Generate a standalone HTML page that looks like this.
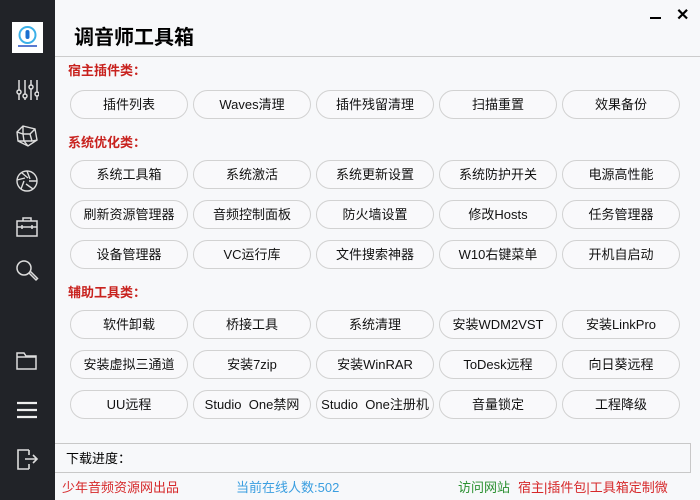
<!DOCTYPE html><html><head><meta charset="utf-8"><style>
*{margin:0;padding:0;box-sizing:border-box}
body{width:700px;height:500px;overflow:hidden;background:#f7f8fa;font-family:"Liberation Sans","Noto Sans CJK SC",sans-serif;position:relative}
#side{position:absolute;left:0;top:0;width:55px;height:500px;background:#212328}
.ic{position:absolute;left:15px;width:24px;height:24px}
#title{position:absolute;left:74px;top:21px;font-size:20px;font-weight:bold;color:#000}
#hl{position:absolute;left:55px;top:56px;width:645px;height:1px;background:#ccc}
.sec{position:absolute;left:68px;font-size:13px;font-weight:bold;color:#c8221e}
.b{position:absolute;width:118px;height:29px;border:1px solid #d2d2d2;border-radius:15px;background:#f9f9fb;font-size:13px;color:#111;text-align:center;line-height:27px;white-space:nowrap}
#prog{position:absolute;left:55px;top:443px;width:636px;height:30px;border:1px solid #c8c8c8;border-left:none;border-right:1px solid #c8c8c8}
#prog span{position:absolute;left:11px;top:4px;font-size:13px}
.f{position:absolute;top:477px;font-size:13px}
</style></head><body>
<div id="side">
<div style="position:absolute;left:12px;top:22px;width:31px;height:31px;background:#fff">
<svg width="31" height="31"><circle cx="15.5" cy="13" r="8" fill="none" stroke="#3cb0e8" stroke-width="2"/><rect x="13.5" y="8" width="4" height="9" rx="2" fill="#1a6fd0"/><rect x="6" y="23" width="19" height="2" fill="#5a7ad0"/></svg></div>
<svg class="ic" style="top:78px" viewBox="0 0 24 24" fill="none" stroke="#ddd" stroke-width="1.5"><path d="M4 2v20M10 2v20M16 2v20M22 2v20"/><circle cx="4" cy="14" r="2" fill="#212328"/><circle cx="10" cy="18" r="2" fill="#212328"/><circle cx="16" cy="9" r="2" fill="#212328"/><circle cx="22" cy="16" r="2" fill="#212328"/></svg>
<svg class="ic" style="top:124px" viewBox="0 0 24 24" fill="none" stroke="#ddd" stroke-width="1.4"><path d="M8 2L20 5L22 16L13 22L3 17L2 8Z M8 2L8 10L2 8 M8 10L15 10L20 5 M15 10L17 17L22 16 M17 17L9 17L13 22 M9 17L8 10 M9 17L3 17"/></svg>
<svg class="ic" style="top:169px" viewBox="0 0 24 24" fill="none" stroke="#ddd" stroke-width="1.4"><circle cx="12" cy="12" r="10"/><path d="M12 2L15 10M22 12L14 12M18 20L11 15M6 20L9 12M2 11L10 9M7 4L13 9"/></svg>
<svg class="ic" style="top:215px" viewBox="0 0 24 24" fill="none" stroke="#ddd" stroke-width="1.5"><rect x="2" y="6" width="20" height="15"/><path d="M8 6V3h8v3M2 12h20M7 10v4M17 10v4"/></svg>
<svg class="ic" style="top:259px" viewBox="0 0 24 24" fill="none" stroke="#ddd" stroke-width="1.5"><circle cx="9" cy="9" r="7"/><path d="M14 14l7 7l1.5-1.5l-7-7"/></svg>
<svg class="ic" style="top:348px" viewBox="0 0 24 24" fill="none" stroke="#ddd" stroke-width="1.5"><path d="M2 5h7l2 3h10v13H2Z M2 9h19"/></svg>
<svg class="ic" style="top:398px" viewBox="0 0 24 24" fill="none" stroke="#eee" stroke-width="2.2"><path d="M2 5h20M2 12h20M2 19h20"/></svg>
<svg class="ic" style="top:447px" viewBox="0 0 24 24" fill="none" stroke="#ddd" stroke-width="1.6"><path d="M14 3H3v19h11M14 17v5M14 3v5M10 12h12M18 8l4 4l-4 4"/></svg>
</div>
<div id="title">调音师工具箱</div>
<div style="position:absolute;left:650px;top:17px;width:11px;height:2px;background:#000"></div>
<div style="position:absolute;left:676px;top:5px;font-size:16px;font-weight:bold">✕</div>
<div id="hl"></div>
<div class="sec" style="top:60px">宿主插件类：</div>
<div class="sec" style="top:132px">系统优化类：</div>
<div class="sec" style="top:282px">辅助工具类：</div>
<div class="b" style="left:70px;top:90px">插件列表</div><div class="b" style="left:193px;top:90px">Waves清理</div><div class="b" style="left:316px;top:90px">插件残留清理</div><div class="b" style="left:439px;top:90px">扫描重置</div><div class="b" style="left:562px;top:90px">效果备份</div>
<div class="b" style="left:70px;top:160px">系统工具箱</div><div class="b" style="left:193px;top:160px">系统激活</div><div class="b" style="left:316px;top:160px">系统更新设置</div><div class="b" style="left:439px;top:160px">系统防护开关</div><div class="b" style="left:562px;top:160px">电源高性能</div>
<div class="b" style="left:70px;top:200px">刷新资源管理器</div><div class="b" style="left:193px;top:200px">音频控制面板</div><div class="b" style="left:316px;top:200px">防火墙设置</div><div class="b" style="left:439px;top:200px">修改Hosts</div><div class="b" style="left:562px;top:200px">任务管理器</div>
<div class="b" style="left:70px;top:240px">设备管理器</div><div class="b" style="left:193px;top:240px">VC运行库</div><div class="b" style="left:316px;top:240px">文件搜索神器</div><div class="b" style="left:439px;top:240px">W10右键菜单</div><div class="b" style="left:562px;top:240px">开机自启动</div>
<div class="b" style="left:70px;top:310px">软件卸载</div><div class="b" style="left:193px;top:310px">桥接工具</div><div class="b" style="left:316px;top:310px">系统清理</div><div class="b" style="left:439px;top:310px">安装WDM2VST</div><div class="b" style="left:562px;top:310px">安装LinkPro</div>
<div class="b" style="left:70px;top:350px">安装虚拟三通道</div><div class="b" style="left:193px;top:350px">安装7zip</div><div class="b" style="left:316px;top:350px">安装WinRAR</div><div class="b" style="left:439px;top:350px">ToDesk远程</div><div class="b" style="left:562px;top:350px">向日葵远程</div>
<div class="b" style="left:70px;top:390px">UU远程</div><div class="b" style="left:193px;top:390px">Studio&nbsp; One禁网</div><div class="b" style="left:316px;top:390px">Studio&nbsp; One注册机</div><div class="b" style="left:439px;top:390px">音量锁定</div><div class="b" style="left:562px;top:390px">工程降级</div>
<div id="prog"><span>下载进度：</span></div>
<div class="f" style="left:62px;color:#d6282a">少年音频资源网出品</div>
<div class="f" style="left:236px;color:#3a9ee0">当前在线人数:502</div>
<div class="f" style="left:458px;color:#2a9030">访问网站</div>
<div class="f" style="left:518px;color:#d6282a">宿主|插件包|工具箱定制微</div>
</body></html>
